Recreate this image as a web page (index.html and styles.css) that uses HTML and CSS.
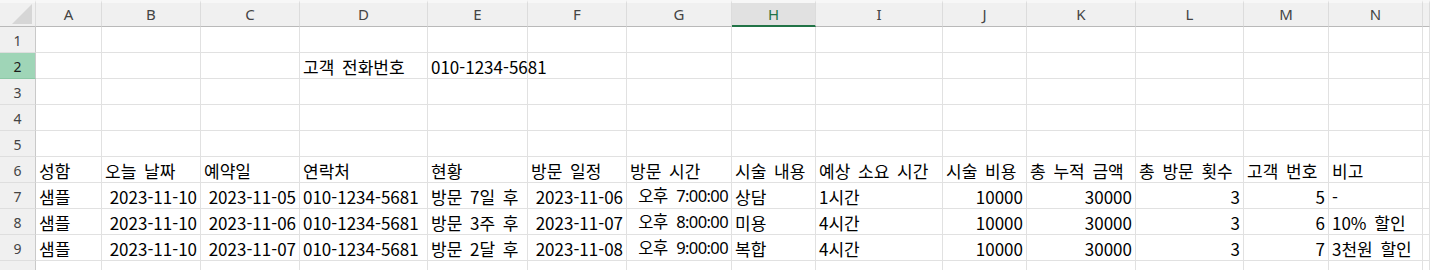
FILE: index.html
```html
<!DOCTYPE html>
<html lang="ko">
<head>
<meta charset="utf-8">
<title>Sheet</title>
<link rel="stylesheet" href="styles.css">
</head>
<body>
<div class="sheet">
  <div class="ch corner"><svg class="tri" width="22" height="21" viewBox="0 0 22 21"><polygon points="1,20 21,20 21,0" fill="#d6d6d6"/></svg></div>
  <div class="ch">A</div><div class="ch">B</div><div class="ch">C</div><div class="ch">D</div><div class="ch">E</div><div class="ch">F</div><div class="ch">G</div><div class="ch active-col">H</div><div class="ch">I</div><div class="ch">J</div><div class="ch">K</div><div class="ch">L</div><div class="ch">M</div><div class="ch">N</div><div class="ch"></div>

  <div class="rh">1</div><div class="c"></div><div class="c"></div><div class="c"></div><div class="c"></div><div class="c"></div><div class="c"></div><div class="c"></div><div class="c"></div><div class="c"></div><div class="c"></div><div class="c"></div><div class="c"></div><div class="c"></div><div class="c"></div><div class="c"></div>

  <div class="rh active-row">2</div><div class="c"></div><div class="c"></div><div class="c"></div><div class="c">고객 전화번호</div><div class="c">010-1234-5681</div><div class="c"></div><div class="c"></div><div class="c"></div><div class="c"></div><div class="c"></div><div class="c"></div><div class="c"></div><div class="c"></div><div class="c"></div><div class="c"></div>

  <div class="rh">3</div><div class="c"></div><div class="c"></div><div class="c"></div><div class="c"></div><div class="c"></div><div class="c"></div><div class="c"></div><div class="c"></div><div class="c"></div><div class="c"></div><div class="c"></div><div class="c"></div><div class="c"></div><div class="c"></div><div class="c"></div>

  <div class="rh">4</div><div class="c"></div><div class="c"></div><div class="c"></div><div class="c"></div><div class="c"></div><div class="c"></div><div class="c"></div><div class="c"></div><div class="c"></div><div class="c"></div><div class="c"></div><div class="c"></div><div class="c"></div><div class="c"></div><div class="c"></div>

  <div class="rh">5</div><div class="c"></div><div class="c"></div><div class="c"></div><div class="c"></div><div class="c"></div><div class="c"></div><div class="c"></div><div class="c"></div><div class="c"></div><div class="c"></div><div class="c"></div><div class="c"></div><div class="c"></div><div class="c"></div><div class="c"></div>

  <div class="rh">6</div><div class="c">성함</div><div class="c">오늘 날짜</div><div class="c">예약일</div><div class="c">연락처</div><div class="c">현황</div><div class="c">방문 일정</div><div class="c">방문 시간</div><div class="c">시술 내용</div><div class="c">예상 소요 시간</div><div class="c">시술 비용</div><div class="c">총 누적 금액</div><div class="c">총 방문 횟수</div><div class="c">고객 번호</div><div class="c">비고</div><div class="c"></div>

  <div class="rh">7</div><div class="c">샘플</div><div class="c r">2023-11-10</div><div class="c r">2023-11-05</div><div class="c">010-1234-5681</div><div class="c">방문 7일 후</div><div class="c r">2023-11-06</div><div class="c r tm">오후 7:00:00</div><div class="c">상담</div><div class="c">1시간</div><div class="c r">10000</div><div class="c r">30000</div><div class="c r">3</div><div class="c r">5</div><div class="c">-</div><div class="c"></div>

  <div class="rh">8</div><div class="c">샘플</div><div class="c r">2023-11-10</div><div class="c r">2023-11-06</div><div class="c">010-1234-5681</div><div class="c">방문 3주 후</div><div class="c r">2023-11-07</div><div class="c r tm">오후 8:00:00</div><div class="c">미용</div><div class="c">4시간</div><div class="c r">10000</div><div class="c r">30000</div><div class="c r">3</div><div class="c r">6</div><div class="c">10% 할인</div><div class="c"></div>

  <div class="rh">9</div><div class="c">샘플</div><div class="c r">2023-11-10</div><div class="c r">2023-11-07</div><div class="c">010-1234-5681</div><div class="c">방문 2달 후</div><div class="c r">2023-11-08</div><div class="c r tm">오후 9:00:00</div><div class="c">복합</div><div class="c">4시간</div><div class="c r">10000</div><div class="c r">30000</div><div class="c r">3</div><div class="c r">7</div><div class="c">3천원 할인</div><div class="c"></div>

  <div class="rh"></div><div class="c"></div><div class="c"></div><div class="c"></div><div class="c"></div><div class="c"></div><div class="c"></div><div class="c"></div><div class="c"></div><div class="c"></div><div class="c"></div><div class="c"></div><div class="c"></div><div class="c"></div><div class="c"></div><div class="c"></div>
</div>
</body>
</html>
```
FILE: styles.css
```css
html, body {
  margin: 0;
  padding: 0;
  background: #ffffff;
  overflow: hidden;
}

.sheet {
  display: grid;
  grid-template-columns: 36px 66px 99px 99px 128px 100px 99px 105px 84px 127px 84px 109px 108px 85px 94px 7px;
  grid-template-rows: 27px repeat(10, 26px);
  width: 1430px;
  height: 270px;
  overflow: hidden;
  font-family: "Noto Sans CJK KR", "Noto Sans", sans-serif;
  font-size: 17px;
  color: #000;
}

.ch {
  box-sizing: border-box;
  background: #f0f0f0;
  border-right: 1px solid #dcdcdc;
  border-bottom: 1px solid #b9b9b9;
  border-top: 3px solid #f7f7f7;
  display: flex;
  align-items: center;
  justify-content: center;
  font-family: "Noto Sans", "Open Sans", sans-serif;
  font-size: 15px;
  color: #444;
  padding-bottom: 1px;
}

.corner {
  justify-content: flex-end;
  align-items: flex-end;
  padding: 0 2px 1px 0;
}

.tri {
  display: block;
}

.active-col {
  background: #e1e1e1;
  color: #217346;
  border-bottom: 2px solid #217346;
}

.rh {
  box-sizing: border-box;
  background: #f0f0f0;
  border-right: 1px solid #c9c9c9;
  border-bottom: 1px solid #dedede;
  display: flex;
  align-items: center;
  justify-content: center;
  font-family: "Noto Sans", "Open Sans", sans-serif;
  font-size: 14px;
  color: #444;
  padding-top: 1px;
}

.active-row {
  background: #9fd5b7;
  color: #1b1b1b;
  border-bottom-color: #8cc8a6;
}

.c {
  box-sizing: border-box;
  border-right: 1px solid #e1e1e1;
  border-bottom: 1px solid #e1e1e1;
  display: flex;
  align-items: center;
  justify-content: flex-start;
  padding: 1px 3px 0 3px;
  white-space: nowrap;
  overflow: visible;
  line-height: 1;
  word-spacing: 3px;
}

.c.r {
  justify-content: flex-end;
}

.c.tm {
  font-family: "Noto Sans", "Noto Sans CJK KR", sans-serif;
  font-size: 16.5px;
  letter-spacing: -0.6px;
  word-spacing: 5px;
}
```
